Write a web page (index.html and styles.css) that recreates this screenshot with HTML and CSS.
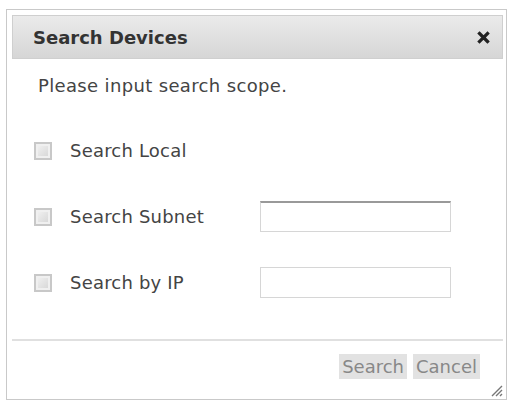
FILE: index.html
```html
<!DOCTYPE html>
<html>
<head>
<meta charset="utf-8">
<link rel="stylesheet" href="styles.css">
</head>
<body>
<div class="dialog">
  <div class="titlebar">
    <span class="title">Search Devices</span>
    <span class="close">
      <svg width="13" height="13" viewBox="0 0 13 13"><path d="M2.5 2.5 L10.5 10.5 M10.5 2.5 L2.5 10.5" stroke="#222" stroke-width="3.2" stroke-linecap="square"/></svg>
    </span>
  </div>
  <div class="content">
    <p class="hint">Please input search scope.</p>
    <div class="row">
      <span class="check"></span>
      <span class="label">Search Local</span>
    </div>
    <div class="row">
      <span class="check"></span>
      <span class="label">Search Subnet</span>
      <span class="field field-top"></span>
    </div>
    <div class="row">
      <span class="check"></span>
      <span class="label">Search by IP</span>
      <span class="field"></span>
    </div>
  </div>
  <div class="footer">
    <span class="btn">Search</span>
    <span class="btn">Cancel</span>
    <svg class="grip" width="14" height="14" viewBox="0 0 14 14"><path d="M13 3 L3 13 M13 7 L7 13 M13 11 L11 13" stroke="#777" stroke-width="1.4"/></svg>
  </div>
</div>
</body>
</html>
```

FILE: styles.css
```css
html, body {
  margin: 0;
  background: #fff;
}
body {
  font-family: "DejaVu Sans", Verdana, sans-serif;
  color: #444;
}
.dialog {
  margin: 9px 2px 0 6px;
  height: 391px;
  border: 1px solid #c9c9c9;
  padding: 5px 3px 0 5px;
  box-sizing: border-box;
  display: flex;
  flex-direction: column;
}
.titlebar {
  height: 44px;
  flex: none;
  box-sizing: border-box;
  border: 1px solid #cfcfcf;
  background: linear-gradient(#ebebeb, #d6d6d6);
  display: flex;
  align-items: center;
  justify-content: space-between;
  padding: 0 12px 0 20px;
}
.title {
  font-weight: bold;
  font-size: 18px;
  color: #333;
}
.close {
  display: flex;
}
.content {
  flex: 1;
  padding: 0 0 0 26px;
}
.hint {
  margin: 16px 0 38px 0;
  font-size: 18px;
  letter-spacing: 0.35px;
  color: #444;
}
.row {
  display: flex;
  align-items: center;
  height: 33px;
  margin-bottom: 33px;
}
.check {
  width: 14px;
  height: 14px;
  border: 2px solid #c8c8c8;
  background: linear-gradient(135deg, #f4f4f4, #d4d4d4);
  box-shadow: inset 0 0 0 2px #f0f0f0;
  margin: 0 18px 0 -4px;
}
.label {
  width: 190px;
  font-size: 18px;
  letter-spacing: 0.2px;
  color: #444;
}
.field {
  width: 191px;
  height: 31px;
  box-sizing: border-box;
  border: 1px solid #d6d6d6;
  background: #fff;
}
.field-top {
  border-top: 2px solid #999;
}
.footer {
  height: 60px;
  flex: none;
  box-sizing: border-box;
  border-top: 2px solid #e0e0e0;
  display: flex;
  justify-content: flex-end;
  align-items: flex-start;
  padding: 13px 23px 0 0;
  gap: 6px;
  position: relative;
}
.btn {
  background: #e2e2e2;
  color: #888;
  font-size: 18px;
  padding: 2px 3px;
  line-height: 21px;
}
.grip {
  position: absolute;
  right: 0;
  bottom: 2px;
}
```
